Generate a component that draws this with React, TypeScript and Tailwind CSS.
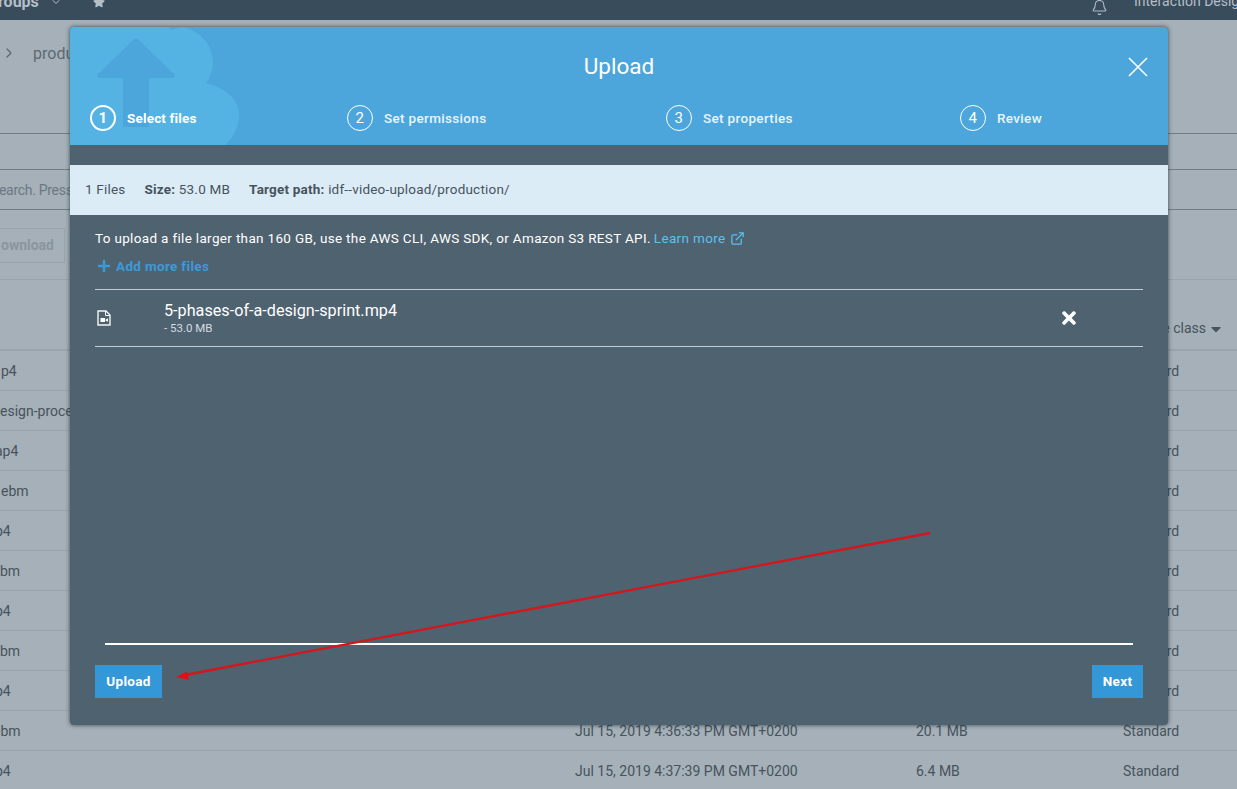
import { Bell, ChevronDown, ChevronRight, ExternalLink } from "lucide-react";
import { FaCaretDown, FaPlus, FaStar, FaTimes } from "react-icons/fa";

const rows = [
  { name: "p4", offset: "ml-[1px]" },
  { name: "esign-process.webm", offset: "ml-0" },
  { name: "ap4", offset: "ml-[-5px]" },
  { name: "ebm", offset: "ml-[1px]" },
  { name: "p4", offset: "ml-[-5px]" },
  { name: "bm", offset: "ml-0" },
  { name: "p4", offset: "ml-[-5px]" },
  { name: "bm", offset: "ml-0" },
  { name: "p4", offset: "ml-[-5px]" },
  { name: "ebm", offset: "ml-[-7px]", date: "Jul 15, 2019 4:36:33 PM GMT+0200", size: "20.1 MB" },
  { name: "p4", offset: "ml-[-5px]", date: "Jul 15, 2019 4:37:39 PM GMT+0200", size: "6.4 MB" },
];

const steps = [
  { n: 1, label: "Select files", width: "w-[257px]", active: true },
  { n: 2, label: "Set permissions", width: "w-[319px]", active: false },
  { n: 3, label: "Set properties", width: "w-[294px]", active: false },
  { n: 4, label: "Review", width: "w-[180px]", active: false },
];

const Background = () => {
  return (
    <div className="flex h-[789px] flex-col bg-[#a5b0b8] text-[14px] text-[#47535d]">
      <div className="flex h-5 shrink-0 items-center overflow-hidden bg-[#394c5b] text-[#b4bfc7]">
        <span className="relative -top-[8px] -ml-[2px] w-[52px] shrink-0 text-[16px] font-bold leading-[20px]">roups</span>
        <ChevronDown className="relative -top-[8px] h-3 w-3 shrink-0" />
        <FaStar className="relative -top-[8px] ml-[31px] h-3 w-3 shrink-0" />
        <Bell className="relative -top-[3px] ml-[986px] h-[17px] w-[17px] shrink-0" strokeWidth={1.5} />
        <span className="relative -top-[9px] ml-[26px] shrink-0 whitespace-nowrap">Interaction Design</span>
      </div>
      <div className="flex h-[114px] shrink-0 items-start border-b border-[#6f7c86] pl-[1px] pt-6 text-[16px] text-[#5d6a75]">
        <ChevronRight className="mt-[1px] h-4 w-4" />
        <span className="ml-4 leading-5">production</span>
      </div>
      <div className="h-9 shrink-0 border-b border-[#6f7c86]" />
      <div className="flex h-10 shrink-0 items-center border-b border-[#6f7c86] pt-[2px] tracking-[-0.3px] text-[#6c7883]">
        <span className="-ml-[1px] whitespace-nowrap">earch. Press</span>
      </div>
      <div className="flex h-[70px] shrink-0 items-start border-b border-[#98a4ac] pt-[18px]">
        <div className="flex h-[35px] w-[65px] items-center justify-end border border-l-0 border-[#98a4ac] pr-[10px] font-bold text-[#8a969f]">
          ownload
        </div>
      </div>
      <div className="flex h-[71px] shrink-0 items-end justify-end border-b-2 border-[#98a4ac] pb-[10px] pr-[13px]">
        <span>Storage class</span>
        <FaCaretDown className="mb-[2px] ml-[2px] h-4 w-4" />
      </div>
      {rows.map((row, i) => (
        <div key={i} className="flex h-10 shrink-0 items-center border-b border-[#98a4ac] pt-[1px] whitespace-nowrap last:border-b-0">
          <span className="w-[575px]">
            <span className={`block ${row.offset}`}>{row.name}</span>
          </span>
          <span className="w-[341px]">{row.date}</span>
          <span className="w-[207px]">{row.size}</span>
          <span>Standard</span>
        </div>
      ))}
    </div>
  );
};

const Modal = () => {
  return (
    <div className="absolute left-[70px] top-[27px] flex h-[698px] w-[1098px] flex-col overflow-hidden rounded-[4px] bg-[#4f6270] text-[13.5px] tracking-[0.33px] shadow-[0_0_4px_rgba(30,40,50,0.8)]">
      <div className="relative h-[118px] shrink-0 overflow-hidden bg-[#4ca6db] text-white">
        <svg className="absolute left-0 top-0" width="170" height="118" viewBox="0 0 170 118">
          <path
            d="M0 0 H99 Q101 4 104 2 Q112 -2 122 3 Q143 14 143 38 Q141 50 136 56 Q170 66 169 90 Q168 106 155 118 H0 Z"
            fill="#55b3e4"
          />
          <path
            d="M63 13 Q66 10 69 13 L104 47 Q106 51 102 51 H79 V100 H53 V51 H30 Q26 51 28 47 Z"
            fill="#4ca6db"
          />
        </svg>
        <h2 className="relative pt-[26px] text-center text-[22.5px] leading-[27px] tracking-normal">Upload</h2>
        <svg className="absolute left-[1058px] top-[30px]" width="20" height="20" viewBox="0 0 20 20">
          <path d="M1 1 19 19M19 1 1 19" stroke="#fff" strokeWidth="1.6" fill="none" />
        </svg>
        <div className="absolute left-5 top-[78px] flex">
          {steps.map((s) => (
            <div key={s.n} className={`flex items-center gap-[11px] ${s.width}`}>
              <span
                className={`flex h-[26px] w-[26px] items-center justify-center rounded-full text-[15px] ${
                  s.active ? "border-2 border-white font-bold" : "border border-white"
                }`}
              >
                {s.n}
              </span>
              <span className={`pt-[1px] ${s.active ? "font-bold tracking-[0.17px]" : "font-medium text-[#e8f4fb]"}`}>{s.label}</span>
            </div>
          ))}
        </div>
      </div>
      <div className="mt-5 flex h-[50px] shrink-0 items-center gap-[19px] bg-[#dcecf7] px-[15px] pb-[1px] tracking-[0.2px] text-[#47535d]">
        <span>1 Files</span>
        <span>
          <b>Size:</b> 53.0 MB
        </span>
        <span>
          <b>Target path:</b> idf--video-upload/production/
        </span>
      </div>
      <div className="flex flex-1 flex-col px-[25px] text-white">
        <p className="mt-[13px] flex h-5 items-center">
          To upload a file larger than 160 GB, use the AWS CLI, AWS SDK, or Amazon S3 REST API.
          <span className="ml-[3px] flex items-center gap-[5px] text-[#5cc0ee]">
            Learn more <ExternalLink className="h-[15px] w-[15px]" />
          </span>
        </p>
        <div className="mt-2 flex h-5 items-center gap-[5px] font-bold text-[#3c9ad8]">
          <FaPlus className="ml-[2px] h-[14px] w-[14px]" />
          Add more files
        </div>
        <div className="mt-[13px] flex h-[58px] items-center border-y border-[#c3ccd3] tracking-normal">
          <svg className="ml-[2px] h-4 w-[14px]" viewBox="0 0 14 16">
            <path d="M1 1h8l4 4v10H1z" fill="none" stroke="#f4f6f7" strokeWidth="1.4" />
            <path d="M8.5 1v4.5H13" fill="none" stroke="#f4f6f7" strokeWidth="1" />
            <path d="M3.5 8h4.5v4H3.5zM8.5 9.7 11 8.2v3.6L8.5 10.4z" fill="#fff" />
          </svg>
          <div className="ml-[53px] flex flex-col">
            <span className="text-[16.2px] leading-5">5-phases-of-a-design-sprint.mp4</span>
            <span className="text-[11.5px] leading-[15px] text-[#d4dbe0]">- 53.0 MB</span>
          </div>
          <FaTimes className="ml-auto mr-[64px] h-5 w-5" />
        </div>
        <div className="mx-[10px] mt-auto h-[2px] bg-white" />
        <div className="mb-[27px] mt-[20px] flex justify-between font-bold">
          <button className="h-[33px] w-[67px] bg-[#3498d8]">Upload</button>
          <button className="h-[33px] w-[51px] bg-[#3498d8]">Next</button>
        </div>
      </div>
    </div>
  );
};

export default function App() {
  return (
    <div className="relative h-[789px] w-[1237px] overflow-hidden font-['Roboto',sans-serif]">
      <Background />
      <Modal />
      {/* red annotation arrow drawn over the screenshot */}
      <svg className="absolute left-0 top-0" width="1237" height="789" viewBox="0 0 1237 789">
        <line x1="930" y1="533" x2="185" y2="675" stroke="#d3171c" strokeWidth="2.4" />
        <path d="M176 677 L187 671.5 L189 680 Z" fill="#e30f15" />
      </svg>
    </div>
  );
}
